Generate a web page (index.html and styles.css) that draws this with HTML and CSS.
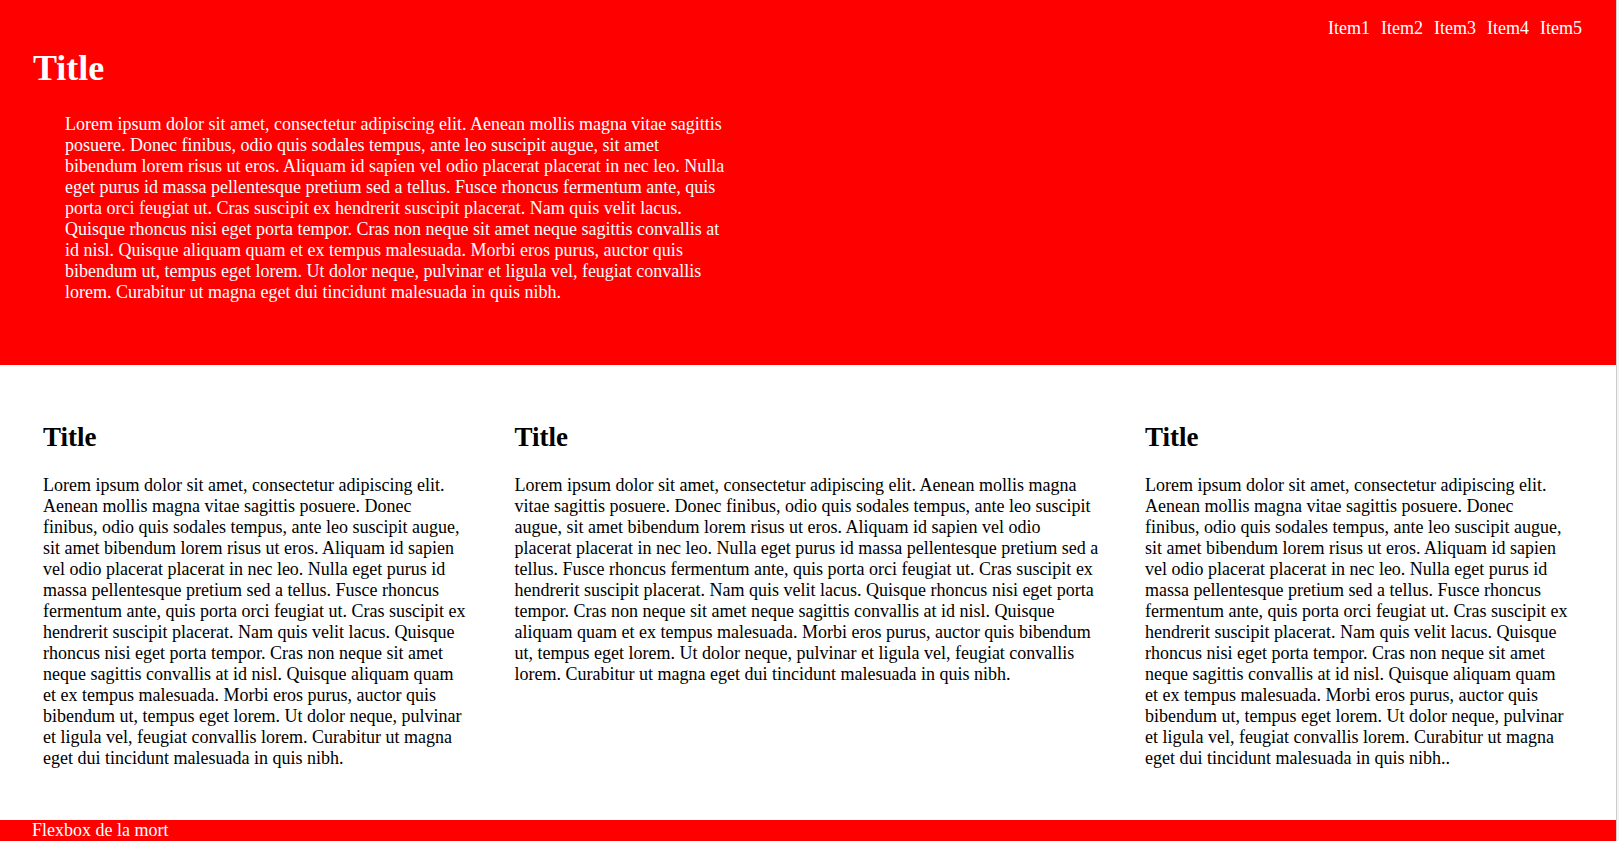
FILE: index.html
```html
<!DOCTYPE html>
<html lang="fr">
<head>
<meta charset="utf-8">
<title>Flexbox de la mort</title>
<link rel="stylesheet" href="styles.css">
</head>
<body>
<div class="page">
  <header class="hero">
    <nav class="nav">
      <a class="nav-item">Item1</a>
      <a class="nav-item">Item2</a>
      <a class="nav-item">Item3</a>
      <a class="nav-item">Item4</a>
      <a class="nav-item">Item5</a>
    </nav>
    <h1 class="hero-title">Title</h1>
    <p class="hero-text">Lorem ipsum dolor sit amet, consectetur adipiscing elit. Aenean mollis magna vitae sagittis posuere. Donec finibus, odio quis sodales tempus, ante leo suscipit augue, sit amet bibendum lorem risus ut eros. Aliquam id sapien vel odio placerat placerat in nec leo. Nulla eget purus id massa pellentesque pretium sed a tellus. Fusce rhoncus fermentum ante, quis porta orci feugiat ut. Cras suscipit ex hendrerit suscipit placerat. Nam quis velit lacus. Quisque rhoncus nisi eget porta tempor. Cras non neque sit amet neque sagittis convallis at id nisl. Quisque aliquam quam et ex tempus malesuada. Morbi eros purus, auctor quis bibendum ut, tempus eget lorem. Ut dolor neque, pulvinar et ligula vel, feugiat convallis lorem. Curabitur ut magna eget dui tincidunt malesuada in quis nibh.</p>
  </header>
  <main class="columns">
    <section class="col">
      <h2 class="col-title">Title</h2>
      <p class="col-text">Lorem ipsum dolor sit amet, consectetur adipiscing elit. Aenean mollis magna vitae sagittis posuere. Donec finibus, odio quis sodales tempus, ante leo suscipit augue, sit amet bibendum lorem risus ut eros. Aliquam id sapien vel odio placerat placerat in nec leo. Nulla eget purus id massa pellentesque pretium sed a tellus. Fusce rhoncus fermentum ante, quis porta orci feugiat ut. Cras suscipit ex hendrerit suscipit placerat. Nam quis velit lacus. Quisque rhoncus nisi eget porta tempor. Cras non neque sit amet neque sagittis convallis at id nisl. Quisque aliquam quam et ex tempus malesuada. Morbi eros purus, auctor quis bibendum ut, tempus eget lorem. Ut dolor neque, pulvinar et ligula vel, feugiat convallis lorem. Curabitur ut magna eget dui tincidunt malesuada in quis nibh.</p>
    </section>
    <section class="col">
      <h2 class="col-title">Title</h2>
      <p class="col-text">Lorem ipsum dolor sit amet, consectetur adipiscing elit. Aenean mollis magna vitae sagittis posuere. Donec finibus, odio quis sodales tempus, ante leo suscipit augue, sit amet bibendum lorem risus ut eros. Aliquam id sapien vel odio placerat placerat in nec leo. Nulla eget purus id massa pellentesque pretium sed a tellus. Fusce rhoncus fermentum ante, quis porta orci feugiat ut. Cras suscipit ex hendrerit suscipit placerat. Nam quis velit lacus. Quisque rhoncus nisi eget porta tempor. Cras non neque sit amet neque sagittis convallis at id nisl. Quisque aliquam quam et ex tempus malesuada. Morbi eros purus, auctor quis bibendum ut, tempus eget lorem. Ut dolor neque, pulvinar et ligula vel, feugiat convallis lorem. Curabitur ut magna eget dui tincidunt malesuada in quis nibh.</p>
    </section>
    <section class="col">
      <h2 class="col-title">Title</h2>
      <p class="col-text">Lorem ipsum dolor sit amet, consectetur adipiscing elit. Aenean mollis magna vitae sagittis posuere. Donec finibus, odio quis sodales tempus, ante leo suscipit augue, sit amet bibendum lorem risus ut eros. Aliquam id sapien vel odio placerat placerat in nec leo. Nulla eget purus id massa pellentesque pretium sed a tellus. Fusce rhoncus fermentum ante, quis porta orci feugiat ut. Cras suscipit ex hendrerit suscipit placerat. Nam quis velit lacus. Quisque rhoncus nisi eget porta tempor. Cras non neque sit amet neque sagittis convallis at id nisl. Quisque aliquam quam et ex tempus malesuada. Morbi eros purus, auctor quis bibendum ut, tempus eget lorem. Ut dolor neque, pulvinar et ligula vel, feugiat convallis lorem. Curabitur ut magna eget dui tincidunt malesuada in quis nibh..</p>
    </section>
  </main>
  <footer class="footer">Flexbox de la mort</footer>
</div>
</body>
</html>
```

FILE: styles.css
```css
html {
  background: #f3f3f3;
}

body {
  margin: 0;
  font-family: "Liberation Serif", "Times New Roman", serif;
  font-size: 18px;
  color: #000;
}

.page {
  width: 1616px;
  border-right: 1px solid #cccccc;
  background: #fff;
  min-height: 841px;
  display: flex;
  flex-direction: column;
}

.hero {
  background: #ff0000;
  color: #fff;
  height: 365px;
  box-sizing: border-box;
  padding: 18px 34px 0 33px;
}

.nav {
  display: flex;
  justify-content: flex-end;
  gap: 11px;
}

.nav-item {
  color: #fff;
  text-decoration: none;
}

.hero-title {
  font-size: 36px;
  font-weight: bold;
  margin: 8px 0 25px;
}

.hero-text {
  margin: 0 0 0 32px;
  width: 663px;
}

.columns {
  display: grid;
  grid-template-columns: 426fr 585fr 425fr;
  column-gap: 45.5px;
  padding: 34px 46px 17px 43px;
  align-items: start;
}

.col-title {
  font-size: 27px;
  font-weight: bold;
  margin: 23.4px 0 21.4px;
}

.col-text {
  margin: 18px 0;
}

.footer {
  background: #ff0000;
  color: #fff;
  height: 21px;
  padding-left: 32px;
  margin-top: auto;
}
```
